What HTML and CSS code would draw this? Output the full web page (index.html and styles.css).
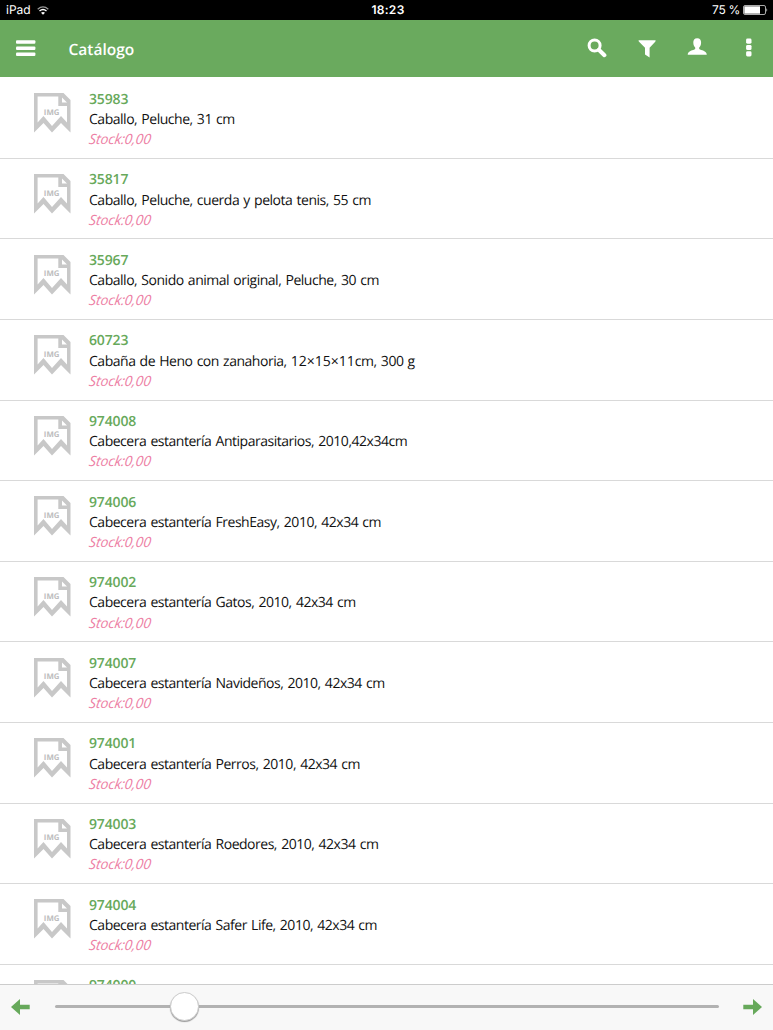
FILE: index.html
```html
<!DOCTYPE html>
<html lang="es">
<head>
    <meta charset="UTF-8">
    <meta name="viewport" content="width=device-width, initial-scale=1.0">
    <title>Catálogo</title>
    <link rel="stylesheet" href="styles.css">
</head>
<body>
    <svg class="defs" width="0" height="0">
        <symbol id="img" viewBox="0 0 37 40">
            <path fill="#c8c8c8" fill-rule="evenodd" d="M0 0H29.5L36.5 7V39.5L27 30L18 39.5L9.5 30L0 39.5ZM3.6 3.6V29.5L9.5 23L18 33L27 23L33 29.5V13H24.3V3.6ZM28 4.5V9.5H33Z"/>
        </symbol>
    </svg>

    <div class="status">
        <div class="device">
            <span>iPad</span>
            <svg width="12" height="9" viewBox="0 0 12 9" fill="none" stroke="#fff" stroke-width="1.3">
                <path d="M.7 3.2Q6-1.3 11.3 3.2" opacity=".6"/>
                <path d="M2.5 5.1Q6 2 9.5 5.1"/>
                <path d="M4 6.7Q6 5.2 8 6.7L6 8.8Z" fill="#fff" stroke="none"/>
            </svg>
        </div>
        <div class="time">18:23</div>
        <div class="battery">
            <span>75 %</span>
            <svg width="25" height="10" viewBox="0 0 25 10">
                <rect x=".5" y=".5" width="22" height="9" rx="1.5" fill="none" stroke="#aaa"/>
                <rect x="1.3" y="1.3" width="15.7" height="7.4" fill="#fff"/>
                <path d="M23.5 3Q25 5 23.5 7Z" fill="#fff"/>
            </svg>
        </div>
    </div>

    <header class="header">
        <svg class="menu" width="20" height="17" viewBox="0 0 20 17" fill="#fff">
            <rect y=".2" width="19.4" height="3.6" rx="1"/>
            <rect y="6.4" width="19.4" height="3.6" rx="1"/>
            <rect y="12.5" width="19.4" height="3.6" rx="1"/>
        </svg>
        <h1>Catálogo</h1>
        <div class="actions">
            <svg width="20" height="20" viewBox="0 0 20 20" fill="none" stroke="#fff">
                <circle cx="7.6" cy="7.5" r="5.5" stroke-width="3"/>
                <path d="M11.8 11.8L17.4 17.2" stroke-width="4" stroke-linecap="round"/>
            </svg>
            <svg width="20" height="20" viewBox="0 0 20 20" fill="#fff">
                <path d="M1.6 2.3H18.6Q18.8 3.3 18 4L12.6 9.7V19.4L8 16.4V9.7L2.3 4Q1.4 3.3 1.6 2.3Z"/>
            </svg>
            <svg width="20" height="20" viewBox="0 0 20 20" fill="#fff">
                <path d="M10.2.3C13 .3 14.2 2.2 14.1 4.8C14 7.3 13.1 8.6 12.2 9.5V11C14 12.4 19.6 12.7 19.8 16.7H.7C.9 12.7 6.4 12.4 8.2 11V9.5C7.3 8.6 6.4 7.3 6.3 4.8C6.2 2.2 7.4.3 10.2.3Z"/>
            </svg>
            <svg width="20" height="20" viewBox="0 0 20 20" fill="#fff">
                <rect x="8.1" y=".5" width="5.4" height="5.2" rx="1.4"/>
                <rect x="8.1" y="6.9" width="5.4" height="5.2" rx="1.4"/>
                <rect x="8.1" y="13.3" width="5.4" height="5.2" rx="1.4"/>
            </svg>
        </div>
    </header>

    <main class="list">
        <div class="item">
            <div class="thumb"><svg><use href="#img"/></svg><span>IMG</span></div>
            <div class="info"><b>35983</b><p>Caballo, Peluche, 31 cm</p><i>Stock:0,00</i></div>
        </div>
        <div class="item">
            <div class="thumb"><svg><use href="#img"/></svg><span>IMG</span></div>
            <div class="info"><b>35817</b><p>Caballo, Peluche, cuerda y pelota tenis, 55 cm</p><i>Stock:0,00</i></div>
        </div>
        <div class="item">
            <div class="thumb"><svg><use href="#img"/></svg><span>IMG</span></div>
            <div class="info"><b>35967</b><p>Caballo, Sonido animal original, Peluche, 30 cm</p><i>Stock:0,00</i></div>
        </div>
        <div class="item">
            <div class="thumb"><svg><use href="#img"/></svg><span>IMG</span></div>
            <div class="info"><b>60723</b><p>Cabaña de Heno con zanahoria, <span class="size">12×15×11</span>cm, 300 g</p><i>Stock:0,00</i></div>
        </div>
        <div class="item">
            <div class="thumb"><svg><use href="#img"/></svg><span>IMG</span></div>
            <div class="info"><b>974008</b><p>Cabecera estantería Antiparasitarios, 2010,42x34cm</p><i>Stock:0,00</i></div>
        </div>
        <div class="item">
            <div class="thumb"><svg><use href="#img"/></svg><span>IMG</span></div>
            <div class="info"><b>974006</b><p>Cabecera estantería FreshEasy, 2010, 42x34 cm</p><i>Stock:0,00</i></div>
        </div>
        <div class="item">
            <div class="thumb"><svg><use href="#img"/></svg><span>IMG</span></div>
            <div class="info"><b>974002</b><p>Cabecera estantería Gatos, 2010, 42x34 cm</p><i>Stock:0,00</i></div>
        </div>
        <div class="item">
            <div class="thumb"><svg><use href="#img"/></svg><span>IMG</span></div>
            <div class="info"><b>974007</b><p>Cabecera estantería Navideños, 2010, 42x34 cm</p><i>Stock:0,00</i></div>
        </div>
        <div class="item">
            <div class="thumb"><svg><use href="#img"/></svg><span>IMG</span></div>
            <div class="info"><b>974001</b><p>Cabecera estantería Perros, 2010, 42x34 cm</p><i>Stock:0,00</i></div>
        </div>
        <div class="item">
            <div class="thumb"><svg><use href="#img"/></svg><span>IMG</span></div>
            <div class="info"><b>974003</b><p>Cabecera estantería Roedores, 2010, 42x34 cm</p><i>Stock:0,00</i></div>
        </div>
        <div class="item">
            <div class="thumb"><svg><use href="#img"/></svg><span>IMG</span></div>
            <div class="info"><b>974004</b><p>Cabecera estantería Safer Life, 2010, 42x34 cm</p><i>Stock:0,00</i></div>
        </div>
        <div class="item">
            <div class="thumb"><svg><use href="#img"/></svg></div>
            <div class="info"><b>974000</b></div>
        </div>
    </main>

    <footer class="footer">
        <svg width="19" height="16" viewBox="0 0 19 16" fill="#67a95b">
            <path d="M0 8L9 0V5.8H18.7V10.2H9V16Z"/>
        </svg>
        <div class="track"><div class="knob"></div></div>
        <svg width="19" height="16" viewBox="0 0 19 16" fill="#67a95b">
            <path d="M19 8L10 0V5.8H.3V10.2H10V16Z"/>
        </svg>
    </footer>
</body>
</html>
```
FILE: styles.css
```css
* {
    box-sizing: border-box;
}
body {
    margin: 0;
    height: 1030px;
    display: flex;
    flex-direction: column;
    overflow: hidden;
    font-family: "Open Sans", "Noto Sans", sans-serif;
    text-rendering: geometricPrecision;
    background: #fff;
}
svg {
    display: block;
    flex-shrink: 0;
}
.defs {
    position: absolute;
}
.status {
    height: 20px;
    flex-shrink: 0;
    display: grid;
    grid-template-columns: 1fr auto 1fr;
    align-items: center;
    padding: 0 5px 0 6px;
    background: #000;
    color: #fff;
    font: 12px/20px Inter, "Liberation Sans", sans-serif;
}
.device,
.battery {
    display: flex;
    align-items: center;
    gap: 6px;
}
.battery {
    justify-content: flex-end;
    gap: 3px;
    letter-spacing: -0.3px;
}
.time {
    padding-left: 2px;
    font-weight: 600;
    letter-spacing: 0.3px;
}
.header {
    height: 57px;
    flex-shrink: 0;
    display: flex;
    align-items: center;
    padding: 0 15.5px;
    background: #6aaa5e;
    color: #fff;
}
.menu {
    margin-top: -1px;
}
.header h1 {
    margin: 0 0 0 33px;
    font-size: 15.5px;
    font-weight: 600;
}
.actions {
    margin: -1px 0 0 auto;
    display: flex;
    gap: 30.2px;
}
.list {
    flex: 1;
    min-height: 0;
    padding-top: 1.3px;
    overflow: hidden;
}
.item {
    height: 80.6px;
    display: flex;
    padding: 15.1px 0 0 33.5px;
    border-bottom: 1px solid #d9d9d9;
}
.thumb {
    position: relative;
    width: 55.5px;
}
.thumb svg {
    width: 37px;
    height: 40px;
}
/* label printed over the placeholder icon */
.thumb span {
    position: absolute;
    top: 14.7px;
    left: 10.3px;
    font-size: 7.8px;
    line-height: 11px;
    font-weight: 700;
    color: #bdbdbd;
}
.info {
    margin-top: -3.7px;
    font-size: 14px;
    line-height: 20.2px;
    white-space: nowrap;
}
.info b {
    display: block;
    font-weight: 600;
    letter-spacing: -0.15px;
    color: #67a95b;
}
.info p {
    margin: 0;
    color: #111;
    letter-spacing: -0.48px;
    word-spacing: 1px;
}
.info .size {
    letter-spacing: 0;
}
.info i {
    display: block;
    color: #ed7fa5;
    letter-spacing: -0.1px;
    transform: skewX(-8deg);
}
.footer {
    height: 46px;
    flex-shrink: 0;
    display: flex;
    align-items: center;
    justify-content: space-between;
    padding: 0 11px 2px;
    background: #f8f8f8;
    border-top: 1px solid #ccc;
}
.track {
    position: relative;
    width: 664px;
    height: 3px;
    border-radius: 2px;
    background: #b2b2b2;
}
.knob {
    position: absolute;
    left: 115px;
    top: -13px;
    width: 29px;
    height: 29px;
    border-radius: 50%;
    background: #fff;
    border: 1px solid #ccc;
    box-shadow: 0 1px 1px #999;
}
```
